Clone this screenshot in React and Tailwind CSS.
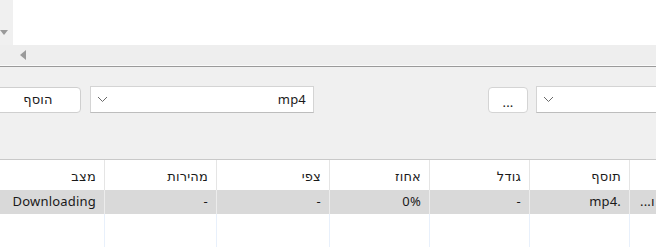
export default function App() {
  const cols = [
    { w: "w-[105px]", h: "מצב", v: "Downloading" },
    { w: "w-[112px]", h: "מהירות", v: "-" },
    { w: "w-[113px]", h: "צפי", v: "-" },
    { w: "w-[100px]", h: "אחוז", v: "0%" },
    { w: "w-[100px]", h: "גודל", v: "-" },
    { w: "w-[100px]", h: "תוסף", v: "mp4." },
  ];
  return (
    <div
      className="w-[656px] h-[247px] overflow-hidden bg-[#f0f0f0] text-[13px] tracking-[0.2px] text-[#1a1a1a] flex flex-col"
      style={{ fontFamily: '"Noto Sans", "DejaVu Sans", sans-serif' }}
    >
      {/* top list area with scrollbars */}
      <div className="flex h-[45px] shrink-0">
        <div className="w-[13px] shrink-0 bg-[#f0f0f0] flex flex-col justify-end pb-[9px]">
          <svg width="8" height="6" viewBox="0 0 8 6">
            <polygon points="0,0 8,0 4,5" fill="#9a9a9a" />
          </svg>
        </div>
        <div className="flex-1 bg-white"></div>
      </div>
      <div className="h-[20px] shrink-0 bg-[#eeeeee] flex items-center pl-[19px]">
        <svg width="7" height="10" viewBox="0 0 7 10">
          <polygon points="7,0 7,10 1,5" fill="#9a9a9a" />
        </svg>
      </div>
      <div className="h-px shrink-0 bg-[#fafafa]"></div>
      <div className="h-px shrink-0 bg-[#9a9a9a]"></div>
      {/* controls panel */}
      <div className="h-[92px] shrink-0 flex items-start pt-[19px]">
        <div className="shrink-0 ml-[-8px] w-[89px] h-[26px] mt-[1px] bg-white border border-[#cfcfcf] rounded-[4px] flex items-center justify-center pl-[3px]">
          הוסף
        </div>
        <div className="shrink-0 ml-[9px] w-[224px] h-[27px] bg-white border border-[#d4d4d4] border-b-[#bdbdbd] flex items-center justify-between px-[6px]">
          <svg width="11" height="7" viewBox="0 0 11 7">
            <polyline points="1,1 5.5,5.5 10,1" fill="none" stroke="#6a6a6a" strokeWidth="1" />
          </svg>
          <span className="pr-[1px]">mp4</span>
        </div>
        <div className="shrink-0 ml-[174px] w-[40px] h-[26px] mt-[1px] bg-white border border-[#d4d4d4] rounded-[4px] flex items-end justify-center pb-[4px] leading-[12px]">
          ...
        </div>
        <div className="shrink-0 ml-[8px] w-[140px] h-[27px] bg-white border border-[#d4d4d4] border-b-[#bdbdbd] flex items-center px-[6px]">
          <svg width="11" height="7" viewBox="0 0 11 7">
            <polyline points="1,1 5.5,5.5 10,1" fill="none" stroke="#6a6a6a" strokeWidth="1" />
          </svg>
        </div>
      </div>
      {/* table */}
      <div className="h-px shrink-0 bg-[#c9c9c9]"></div>
      <div className="flex-1 bg-white flex flex-col">
        <div className="h-[30px] flex shrink-0">
          {cols.map((c, i) => (
            <div
              key={i}
              className={`${c.w} shrink-0 border-r border-[#e5e5e5] flex items-center justify-end pr-[8px] pt-[3px]`}
            >
              {c.h}
            </div>
          ))}
          <div className="flex-1"></div>
        </div>
        <div className="h-[24px] flex shrink-0 bg-[#d9d9d9]">
          {cols.map((c, i) => (
            <div
              key={i}
              className={`${c.w} shrink-0 border-r border-[#ececec] flex items-center justify-end pr-[8px]`}
            >
              {c.v}
            </div>
          ))}
          <div className="flex-1 flex items-center pl-[10px]">...ו</div>
        </div>
        <div className="flex-1 flex">
          {cols.map((c, i) => (
            <div key={i} className={`${c.w} shrink-0 border-r border-[#e8f0fb]`}></div>
          ))}
          <div className="flex-1"></div>
        </div>
      </div>
    </div>
  );
}
